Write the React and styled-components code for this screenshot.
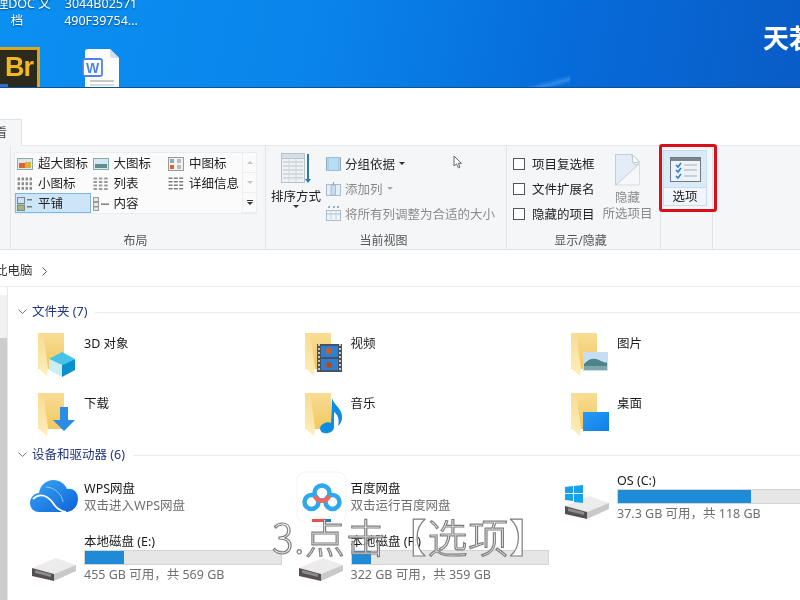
import React from 'react'
import styled, { createGlobalStyle } from 'styled-components'

const GlobalStyle = createGlobalStyle`
  html, body { margin: 0; padding: 0; background: #fff; }
  * { box-sizing: border-box; }
`

const Page = styled.div`
  position: relative;
  width: 800px;
  height: 600px;
  overflow: hidden;
  background: #fff;
  color: #222;
  font-family: "Noto Sans", "Noto Sans CJK SC", sans-serif;
  font-size: 12.5px;
  filter: blur(0.5px);
`

const SharedDefs = styled.svg`
  position: absolute;
  width: 0;
  height: 0;
`

const Desktop = styled.div`
  display: flex;
  gap: 10px;
  height: 88px;
  overflow: hidden;
  border-bottom: 1px solid #0b5299;
  background:
    linear-gradient(165deg, transparent 0 88%, rgba(120, 200, 255, 0.35) 92%, transparent 96%) 480px 0 / 90px 88px no-repeat,
    linear-gradient(100deg, #0b90f2 0%, #0a84ea 40%, #066cda 70%, #0a5cc6 100%);
`

const DeskItem = styled.div`
  flex: none;
  display: flex;
  flex-direction: column;
  align-items: center;
  width: 74px;
  &:first-child { margin-left: -20px; }
`

const DeskLabel = styled.div`
  margin-top: -5px;
  height: 34px;
  width: 90px;
  flex: none;
  text-align: center;
  color: #fff;
  font-size: 12.5px;
  line-height: 17px;
  white-space: nowrap;
  text-shadow: 0 1px 2px rgba(0, 0, 0, 0.5);
`

const BrTile = styled.div`
  position: relative;
  margin-top: 18px;
  width: 46px;
  height: 46px;
  flex: none;
  padding-left: 8px;
  border: 3px solid #e0a31e;
  background: #2b2a1c;
  color: #f2b722;
  font-family: "Liberation Sans", sans-serif;
  font-weight: 700;
  font-size: 27px;
  letter-spacing: -1px;
  line-height: 34px;

  &::after {
    content: "";
    position: absolute;
    left: 3px;
    bottom: 0;
    width: 8px;
    height: 6px;
    background: #2a6fc4;
  }
`

const WordIcon = styled.svg`
  margin-top: 18px;
  flex: none;
`

const Brand = styled.div`
  flex: none;
  margin: 22px 0 0 615px;
  color: #fff;
  font-family: "Noto Sans CJK SC", sans-serif;
  font-size: 26px;
  font-weight: 700;
  line-height: 30px;
  white-space: nowrap;
`

const TabStrip = styled.div`
  display: flex;
  align-items: flex-end;
  height: 58px;
  background: #fff;
  border-bottom: 1px solid #e6e6e6;
`

const Tab = styled.div`
  display: flex;
  justify-content: flex-end;
  width: 22px;
  height: 27px;
  padding: 4px 14px 0 0;
  margin-bottom: -1px;
  overflow: hidden;
  background: #f5f6f7;
  border-top: 1px solid #e2e2e2;
  border-right: 1px solid #e2e2e2;
  white-space: nowrap;
  font-size: 12px;
  line-height: 18px;
  color: #444;
`

const Ribbon = styled.div`
  display: flex;
  height: 104px;
  background: #f5f6f7;
  border-bottom: 1px solid #e2e2e2;
`

const Group = styled.div`
  position: relative;
  flex: none;
  display: flex;
  flex-direction: column;
  width: ${(p) => p.$width}px;
  border-right: 1px solid #e3e4e5;
`

const GroupBody = styled.div`
  flex: 1;
  display: flex;
  min-height: 0;
`

const GroupLabel = styled.div`
  height: 21px;
  text-align: center;
  font-size: 12px;
  line-height: 26px;
  color: #555;
  padding-right: ${(p) => p.$shift || 0}px;
`

const Gallery = styled.div`
  display: flex;
  width: 243px;
  height: 62px;
  margin: 6px 0 0 3px;
  background: #fbfbfb;
  border: 1px solid #ececec;
`

const GalleryGrid = styled.div`
  flex: 1;
  display: grid;
  grid-template-columns: repeat(3, 75.5px);
  grid-auto-rows: 20px;
`

const GalleryItem = styled.div`
  display: flex;
  align-items: center;
  gap: 5px;
  padding: 2px 0 0 1px;
  white-space: nowrap;
  line-height: 18px;
  background: ${(p) => (p.$selected ? '#cde5f9' : 'transparent')};
  border: 1px solid ${(p) => (p.$selected ? '#7eb6e4' : 'transparent')};
`

const Thumb = styled.svg`
  flex: none;
`

const GalleryScroll = styled.div`
  width: 14px;
  display: flex;
  flex-direction: column;
  border-left: 1px solid #eee;
`

const ScrollBtn = styled.div`
  flex: 1;
  display: flex;
  flex-direction: column;
  gap: 1px;
  align-items: center;
  justify-content: center;
  border-bottom: 1px solid #eee;
`

const ScrollBar = styled.div`
  width: 6px;
  height: 1px;
  background: #333;
`

const Caret = styled.div`
  width: 0;
  height: 0;
  border: 3px solid transparent;
  border-top: 3px solid ${(p) => p.$color || '#333'};
  border-bottom: 0;
  transform: ${(p) => (p.$up ? 'rotate(180deg)' : 'none')};
`

const SortButton = styled.div`
  width: 60px;
  flex: none;
  display: flex;
  flex-direction: column;
  align-items: center;
  padding-top: 7px;
  font-size: 12.5px;
  line-height: 16px;
  white-space: nowrap;
`

const SortText = styled.span`
  margin-top: 4px;
`

const RowStack = styled.div`
  display: flex;
  flex-direction: column;
  padding-top: 5px;
`

const ViewRow = styled.div`
  display: flex;
  align-items: center;
  gap: 4px;
  height: 25px;
  white-space: nowrap;
  color: ${(p) => (p.$muted ? '#8a8a8a' : '#2a2a2a')};
`

const CheckRow = styled.div`
  display: flex;
  align-items: center;
  gap: 7px;
  height: 25px;
  padding-left: 6px;
  white-space: nowrap;
`

const CheckBox = styled.span`
  width: 12px;
  height: 12px;
  background: #fff;
  border: 1px solid #555;
`

const HideButton = styled.div`
  width: 54px;
  margin-left: 6px;
  display: flex;
  flex-direction: column;
  align-items: center;
  padding-top: 8px;
  color: #8a8a8a;
  line-height: 16px;
  white-space: nowrap;
`

const HideText = styled.div`
  margin-top: 4px;
  text-align: center;
`

const OptionsButton = styled.div`
  width: 44px;
  height: 56px;
  margin: 4px 0 0 2px;
  display: flex;
  flex-direction: column;
  background: #dbeaf7;
  border: 1px solid #c8deef;
`

const OptionsTop = styled.div`
  height: 37px;
  display: flex;
  align-items: center;
  justify-content: center;
`

const OptionsText = styled.div`
  flex: 1;
  background: #f0f6fb;
  border-top: 1px solid #c8deef;
  text-align: center;
  font-size: 12.5px;
  line-height: 17px;
  color: #222;
`

const RedBox = styled.div`
  position: absolute;
  left: -2px;
  top: -2px;
  width: 58px;
  height: 68px;
  border: 3px solid #d9101c;
  border-radius: 3px;
`

const Cursor = styled.svg`
  position: absolute;
  left: 187px;
  top: 9px;
`

const AddressBar = styled.div`
  display: flex;
  align-items: flex-start;
  gap: 8px;
  height: 37px;
  padding: 12px 0 0 0;
  border-bottom: 1px solid #ececec;
  background: #fff;
  line-height: 18px;
  color: #333;
`

const Crumb = styled.span`
  margin-left: -5px;
  font-size: 12.5px;
`

const CrumbArrow = styled.svg`
  margin-top: 5px;
`

const Body = styled.div`
  display: flex;
  height: 313px;
  overflow: hidden;
`

const Rail = styled.div`
  flex: none;
  width: 8px;
  display: flex;
  flex-direction: column;
  padding-top: 8px;
  border-right: 1px solid #e8e8e8;
`

const RailTrack = styled.div`
  height: 43px;
  background: #f1f1f1;
`

const RailThumb = styled.div`
  flex: 1;
  background: #cdcdcd;
`

const Main = styled.div`
  flex: 1;
  min-width: 0;
`

const SectionHead = styled.div`
  display: flex;
  align-items: center;
  gap: 5px;
  height: 16px;
  margin: ${(p) => p.$top}px 0 0 10px;
  color: #23367f;
  font-size: 12.5px;
  line-height: 16px;
  white-space: nowrap;
`

const HeadLine = styled.div`
  flex: 1;
  height: 1px;
  margin-left: 3px;
  background: #e9ecf1;
`

const TileGrid = styled.div`
  display: grid;
  grid-template-columns: repeat(3, 266.5px);
  margin: ${(p) => p.$top}px 0 0 22px;
  row-gap: ${(p) => p.$gap}px;
  grid-auto-rows: ${(p) => p.$row}px;
`

const Tile = styled.div`
  display: flex;
  min-width: 0;
`

const TileIcon = styled.svg`
  flex: none;
  overflow: visible;
`

const TileText = styled.div`
  flex: 1;
  min-width: 0;
  padding-top: ${(p) => p.$top}px;
  line-height: 17px;
  white-space: nowrap;
`

const TileName = styled.div`
  color: #1a1a1a;
  font-size: 12.5px;
`

const TileSub = styled.div`
  color: #6f6f6f;
  font-size: 12.5px;
`

const Meter = styled.div`
  width: 198px;
  height: 15px;
  margin-bottom: 1px;
  background: #e6e6e6;
  border: 1px solid #d4d4d4;
`

const MeterFill = styled.div`
  height: 100%;
  background: #1f8ad6;
`

const Caption = styled.div`
  position: absolute;
  left: 272px;
  top: 510px;
  color: rgba(255, 255, 255, 0.85);
  font-family: "Noto Sans CJK SC", sans-serif;
  font-size: 40px;
  font-weight: 300;
  letter-spacing: 0.8px;
  line-height: 52px;
  white-space: nowrap;
  -webkit-text-stroke: 1.2px #7f7f7f;
`

const Folder = ({ children }) => (
  <TileIcon width="54" height="44" viewBox="0 0 54 44">
    <rect x="8" y="1" width="26" height="36" fill="url(#folderBack)" />
    <path d="M8 1 L13 1 L18 36 L17 44 L8 36 Z" fill="url(#folderFlap)" />
    {children}
  </TileIcon>
)

const Disk = () => (
  <g>
    <path d="M0 10 L24 0 L44 7 L22 16 Z" fill="#ececec" />
    <path d="M0 10 L22 16 V23 L0 18 Z" fill="#55504f" />
    <path d="M3 12 L19 16 V19 L3 15 Z" fill="#8b8b8b" />
    <path d="M22 16 L44 7 V13 L22 23 Z" fill="#c9c9c9" />
  </g>
)

const DotGrid = ({ cols, rows, w, h, color }) => {
  const cells = []
  for (let r = 0; r < rows; r++) {
    for (let c = 0; c < cols; c++) {
      cells.push(
        <rect key={r + '-' + c} x={c * (16 / cols) + 0.5} y={r * (14 / rows) + 0.5} width={w} height={h} fill={color} />
      )
    }
  }
  return <g>{cells}</g>
}

const layoutItems = [
  { text: '超大图标', icon: (
    <g>
      <rect x="0.5" y="1.5" width="15" height="11" fill="#dfe7ee" stroke="#8aa" />
      <rect x="2" y="6" width="6" height="5" fill="#d9662e" />
      <rect x="8" y="5" width="6" height="6" fill="#d8b13a" />
    </g>
  ) },
  { text: '大图标', icon: (
    <g>
      <rect x="0.5" y="1.5" width="15" height="11" fill="#d8e8f2" stroke="#8aa" />
      <rect x="2" y="7" width="12" height="4" fill="#5f8f8a" />
    </g>
  ) },
  { text: '中图标', icon: (
    <g>
      <rect x="0.5" y="0.5" width="15" height="13" fill="#f2f2f2" stroke="#999" />
      <rect x="2" y="2" width="4" height="4" fill="#8aa7bd" />
      <rect x="9" y="2" width="4" height="4" fill="#bbb" />
      <rect x="2" y="8" width="4" height="4" fill="#d9662e" />
      <rect x="9" y="8" width="4" height="4" fill="#bbb" />
    </g>
  ) },
  { text: '小图标', icon: <DotGrid cols={4} rows={3} w={2.5} h={3} color="#8f8f8f" /> },
  { text: '列表', icon: <DotGrid cols={3} rows={4} w={3.5} h={2} color="#9c9c9c" /> },
  { text: '详细信息', icon: <DotGrid cols={3} rows={4} w={4} h={1.4} color="#777" /> },
  { selected: true, text: '平铺', icon: (
    <g>
      <rect x="0.5" y="0.5" width="7" height="6" fill="#cfe0ea" stroke="#789" />
      <rect x="0.5" y="8" width="7" height="5.5" fill="#a8b36a" stroke="#789" />
      <rect x="10" y="2" width="5" height="1.5" fill="#777" />
      <rect x="10" y="9" width="5" height="1.5" fill="#777" />
    </g>
  ) },
  { text: '内容', icon: (
    <g>
      <rect x="0.5" y="0.5" width="5" height="4" fill="#e8e8e8" stroke="#999" />
      <rect x="0.5" y="5.5" width="5" height="4" fill="#e8e8e8" stroke="#999" />
      <rect x="0.5" y="10" width="5" height="3.5" fill="#e8e8e8" stroke="#999" />
      <rect x="8" y="6.5" width="8" height="1.4" fill="#777" />
    </g>
  ) },
]

const SortIcon = () => (
  <svg width="32" height="32" viewBox="0 0 32 32">
    <rect x="1.5" y="0.5" width="23" height="29" fill="#eef2f6" stroke="#b7c2cc" />
    <rect x="1.5" y="0.5" width="23" height="5" fill="#d6dee6" stroke="#b7c2cc" />
    {[9, 13, 17, 21, 25].map((y) => (
      <line key={y} x1="3" x2="23" y1={y} y2={y} stroke="#b9c3cc" />
    ))}
    {[9, 16].map((x) => (
      <line key={x} x1={x} x2={x} y1="6" y2="29" stroke="#cfd7de" />
    ))}
    <path d="M27 1 H29 V26 H31 L28 30 L25 26 H27 Z" fill="#2c79b9" />
  </svg>
)

const GroupByIcon = () => (
  <svg width="15" height="14" viewBox="0 0 15 14">
    <rect x="2" y="0.5" width="11" height="13" fill="#bcdcf3" stroke="#92c0e2" />
    <rect x="0" y="0" width="1.2" height="14" fill="#9aa" />
    <rect x="13.8" y="0" width="1.2" height="14" fill="#9aa" />
  </svg>
)

const AddColIcon = () => (
  <svg width="15" height="14" viewBox="0 0 15 14">
    <rect x="0.5" y="2.5" width="14" height="11" fill="#e6eef6" stroke="#a9bccd" />
    <rect x="5" y="3" width="4.5" height="10" fill="#c6dcef" stroke="#a9bccd" />
    <rect x="7" y="0" width="1" height="3" fill="#7a9dbb" />
  </svg>
)

const FitIcon = () => (
  <svg width="15" height="15" viewBox="0 0 15 15">
    <rect x="0.5" y="4.5" width="14" height="10" fill="#f2f5f8" stroke="#a9bccd" />
    <line x1="0" x2="15" y1="8" y2="8" stroke="#a9bccd" />
    <line x1="5" x2="5" y1="4" y2="15" stroke="#c4d2de" />
    <line x1="10" x2="10" y1="4" y2="15" stroke="#c4d2de" />
    <path d="M2 1 H4 M7 1 H9 M11 1 H13" stroke="#7a9dbb" strokeWidth="1.4" />
  </svg>
)

const HideIcon = () => (
  <svg width="25" height="32" viewBox="0 0 25 32">
    <path d="M0.5 0.5 H17 L24.5 8 V31 H0.5 Z" fill="#f6f7f8" stroke="#d9dde2" />
    <path d="M0.5 0.5 H17 L20 11 L24 10 L1 31 H0.5 Z" fill="#e4edf7" stroke="#c4cdd8" />
    <path d="M17 0.5 L24.5 8 L18 9 Z" fill="#fff" stroke="#bcc3cc" />
  </svg>
)

const OptionsIcon = () => (
  <svg width="31" height="25" viewBox="0 0 31 25">
    <rect x="0.5" y="0.5" width="30" height="24" fill="#eef3f8" stroke="#6f7a85" />
    <rect x="1" y="1" width="29" height="3" fill="#7b868f" />
    {[8, 13, 19].map((y) => (
      <g key={y}>
        <path d={`M6 ${y} l2 2 l3 -4`} fill="none" stroke="#2f80c4" strokeWidth="1.6" />
        <line x1="14" x2="27" y1={y} y2={y} stroke="#a5aeb6" />
      </g>
    ))}
  </svg>
)

const Chevron = () => (
  <svg width="9" height="6" viewBox="0 0 9 6">
    <path d="M0.5 0.5 L4.5 4.5 L8.5 0.5" fill="none" stroke="#777" />
  </svg>
)

const App = () => (
  <Page>
    <GlobalStyle />
    <SharedDefs>
      <defs>
        <linearGradient id="folderBack" x1="0" y1="0" x2="0" y2="1">
          <stop offset="0" stopColor="#f8dd95" />
          <stop offset="1" stopColor="#f2c760" />
        </linearGradient>
        <linearGradient id="folderFlap" x1="0" y1="0" x2="0" y2="1">
          <stop offset="0" stopColor="#f8dc92" />
          <stop offset="1" stopColor="#fdeeba" />
        </linearGradient>
        <linearGradient id="deskFill" x1="0" y1="0" x2="1" y2="1">
          <stop offset="0" stopColor="#2a9bf5" />
          <stop offset="1" stopColor="#0f7fe6" />
        </linearGradient>
        <linearGradient id="cloudFill" x1="0" y1="0" x2="1" y2="1">
          <stop offset="0" stopColor="#3aa8f5" />
          <stop offset="1" stopColor="#0c62d8" />
        </linearGradient>
      </defs>
    </SharedDefs>
    <Desktop>
      <DeskItem>
        <DeskLabel>
          整理DOC 文
          <br />
          档
        </DeskLabel>
        <BrTile>Br</BrTile>
      </DeskItem>
      <DeskItem>
        <DeskLabel>
          3044B02571
          <br />
          490F39754...
        </DeskLabel>
        <WordIcon width="38" height="46" viewBox="0 0 38 46">
          <path d="M3 5 Q3 2 6 2 H28 L37 11 V46 H3 Z" fill="#fdfdfe" />
          <path d="M28 2 L37 11 H30 Q28 11 28 9 Z" fill="#d6deea" />
          <rect x="1" y="12" width="19" height="17" rx="2" fill="#fff" stroke="#4c86e0" strokeWidth="1.8" />
          <text x="10.5" y="25.5" textAnchor="middle" fontSize="14" fontWeight="700" fill="#4c86e0" fontFamily="Liberation Sans">W</text>
          <rect x="8" y="33" width="24" height="2" fill="#c8c8c8" />
          <rect x="8" y="37" width="24" height="2" fill="#d8d8d8" />
        </WordIcon>
      </DeskItem>
      <Brand>天若</Brand>
    </Desktop>

    <TabStrip>
      <Tab>查看</Tab>
    </TabStrip>

    <Ribbon>
      <Group $width={11} />
      <Group $width={255}>
        <GroupBody>
          <Gallery>
            <GalleryGrid>
              {layoutItems.map((item) => (
                <GalleryItem key={item.text} $selected={item.selected}>
                  <Thumb width="16" height="14" viewBox="0 0 16 14">{item.icon}</Thumb>
                  {item.text}
                </GalleryItem>
              ))}
            </GalleryGrid>
            <GalleryScroll>
              <ScrollBtn>
                <Caret $color="#c4c4c4" $up />
              </ScrollBtn>
              <ScrollBtn>
                <Caret $color="#c4c4c4" />
              </ScrollBtn>
              <ScrollBtn>
                <ScrollBar />
                <Caret />
              </ScrollBtn>
            </GalleryScroll>
          </Gallery>
        </GroupBody>
        <GroupLabel $shift={5}>布局</GroupLabel>
      </Group>
      <Group $width={241}>
        <GroupBody>
          <SortButton>
            <SortIcon />
            <SortText>排序方式</SortText>
            <Caret />
          </SortButton>
          <RowStack>
            <ViewRow>
              <GroupByIcon />
              分组依据
              <Caret />
            </ViewRow>
            <ViewRow $muted>
              <AddColIcon />
              添加列
              <Caret $color="#aaa" />
            </ViewRow>
            <ViewRow $muted>
              <FitIcon />
              将所有列调整为合适的大小
            </ViewRow>
          </RowStack>
        </GroupBody>
        <GroupLabel $shift={5}>当前视图</GroupLabel>
        <Cursor width="10" height="14" viewBox="0 0 10 14">
          <path d="M1 1 V11 L3.5 9 L5.5 13 L7 12 L5.2 8.4 H8.5 Z" fill="#fff" stroke="#666" />
        </Cursor>
      </Group>
      <Group $width={154}>
        <GroupBody>
          <RowStack>
            <CheckRow>
              <CheckBox />
              项目复选框
            </CheckRow>
            <CheckRow>
              <CheckBox />
              文件扩展名
            </CheckRow>
            <CheckRow>
              <CheckBox />
              隐藏的项目
            </CheckRow>
          </RowStack>
          <HideButton>
            <HideIcon />
            <HideText>
              隐藏
              <br />
              所选项目
            </HideText>
          </HideButton>
        </GroupBody>
        <GroupLabel $shift={6}>显示/隐藏</GroupLabel>
      </Group>
      <Group $width={52}>
        <OptionsButton>
          <OptionsTop>
            <OptionsIcon />
          </OptionsTop>
          <OptionsText>选项</OptionsText>
        </OptionsButton>
        <RedBox />
      </Group>
    </Ribbon>

    <AddressBar>
      <Crumb>此电脑</Crumb>
      <CrumbArrow width="7" height="9" viewBox="0 0 7 9">
        <path d="M1.5 0.5 L5.5 4.5 L1.5 8.5" fill="none" stroke="#555" />
      </CrumbArrow>
    </AddressBar>

    <Body>
      <Rail>
        <RailTrack />
        <RailThumb />
      </Rail>
      <Main>
        <SectionHead $top={17}>
          <Chevron />
          文件夹 (7)
          <HeadLine />
        </SectionHead>
        <TileGrid $top={12} $gap={16} $row={44}>
          <Tile>
            <Folder>
              <path d="M19 27 L32 20 L45 27 L32 33 Z" fill="#46c3e8" />
              <path d="M19 27 L32 33 V45 L19 38 Z" fill="#c9eef6" />
              <path d="M45 27 L32 33 V45 L45 38 Z" fill="#0a8fce" />
            </Folder>
            <TileText $top={3}>
              <TileName>3D 对象</TileName>
            </TileText>
          </Tile>
          <Tile>
            <Folder>
              <rect x="20" y="12" width="25" height="28" fill="#47525c" />
              <rect x="24" y="14" width="17" height="11" fill="#2f7fd0" />
              <rect x="24" y="27" width="17" height="11" fill="#2f7fd0" />
              <circle cx="32" cy="19" r="3" fill="#d8581f" />
              <circle cx="32" cy="33" r="3" fill="#b8481a" />
              <line x1="22" x2="22" y1="12" y2="40" stroke="#c8c8c8" strokeDasharray="2 2" strokeWidth="2" />
              <line x1="43" x2="43" y1="12" y2="40" stroke="#c8c8c8" strokeDasharray="2 2" strokeWidth="2" />
            </Folder>
            <TileText $top={3}>
              <TileName>视频</TileName>
            </TileText>
          </Tile>
          <Tile>
            <Folder>
              <rect x="20" y="20" width="25" height="19" fill="#c6def3" />
              <path d="M21 32 Q28 24 36 28 T44 30 V38 H21 Z" fill="#4c8488" />
              <rect x="21" y="34" width="23" height="4" fill="#7ea6a8" />
            </Folder>
            <TileText $top={3}>
              <TileName>图片</TileName>
            </TileText>
          </Tile>
          <Tile>
            <Folder>
              <path d="M30 15 H38 V28 H45 L34 39 L23 28 H30 Z" fill="#2d8be8" />
            </Folder>
            <TileText $top={3}>
              <TileName>下载</TileName>
            </TileText>
          </Tile>
          <Tile>
            <Folder>
              <path d="M35 6 C37 14 46 16 45 27 C44 31 43 32 41 34 C43 26 40 22 37 20 V35 C37 40 31 42 27 41 C22 40 22 34 26 32 C29 30 32 30 34 31 Z" fill="#0c8de0" />
            </Folder>
            <TileText $top={3}>
              <TileName>音乐</TileName>
            </TileText>
          </Tile>
          <Tile>
            <Folder>
              <rect x="20" y="20" width="26" height="19" fill="url(#deskFill)" />
            </Folder>
            <TileText $top={3}>
              <TileName>桌面</TileName>
            </TileText>
          </Tile>
        </TileGrid>

        <SectionHead $top={11}>
          <Chevron />
          设备和驱动器 (6)
          <HeadLine />
        </SectionHead>
        <TileGrid $top={9} $gap={11} $row={50}>
          <Tile>
            <TileIcon width="54" height="50" viewBox="0 0 54 50">
              <path d="M9 40 C2 40 0 34 0 31 C0 25 5 21 9 21 C10 13 17 8 23 8 C30 8 35 12 37 17 C44 16 48 21 48 27 C48 35 42 40 36 40 Z" fill="url(#cloudFill)" />
              <path d="M3 27 C10 20 18 24 23 31 C26 36 30 39 36 40" fill="none" stroke="#fff" strokeWidth="1.8" />
              <path d="M16 15 C24 15 32 22 33 30" fill="none" stroke="#8cc8f8" strokeWidth="1" />
            </TileIcon>
            <TileText $top={8}>
              <TileName>WPS网盘</TileName>
              <TileSub>双击进入WPS网盘</TileSub>
            </TileText>
          </Tile>
          <Tile>
            <TileIcon width="54" height="50" viewBox="0 0 54 50">
              <rect x="0" y="0" width="49" height="50" rx="8" fill="#fff" stroke="#f4f4f4" />
              <circle cx="14.5" cy="30" r="7" fill="none" stroke="#2ea8ec" strokeWidth="4.5" />
              <circle cx="35.5" cy="30" r="7" fill="none" stroke="#2ea8ec" strokeWidth="4.5" />
              <circle cx="25" cy="21" r="7.5" fill="none" stroke="#2ea8ec" strokeWidth="4.5" />
              <path d="M18 24 A7.5 7.5 0 0 0 32 24" fill="none" stroke="#ef6560" strokeWidth="4.5" />
            </TileIcon>
            <TileText $top={8}>
              <TileName>百度网盘</TileName>
              <TileSub>双击运行百度网盘</TileSub>
            </TileText>
          </Tile>
          <Tile>
            <TileIcon width="54" height="50" viewBox="0 0 54 50">
              <g transform="translate(2 24)">
                <Disk />
              </g>
              <path d="M2 15 L10 14 V21 H2 Z M11 14 L20 13 V21 H11 Z M2 22 H10 V29 L2 28 Z M11 22 H20 V31 L11 30 Z" fill="#14a3e8" />
            </TileIcon>
            <TileText $top={0}>
              <TileName>OS (C:)</TileName>
              <Meter>
                <MeterFill style={{ width: `${(134 / 198) * 100}%` }} />
              </Meter>
              <TileSub>37.3 GB 可用，共 118 GB</TileSub>
            </TileText>
          </Tile>
          <Tile>
            <TileIcon width="54" height="50" viewBox="0 0 54 50">
              <g transform="translate(2 25)">
                <Disk />
              </g>
            </TileIcon>
            <TileText $top={0}>
              <TileName>本地磁盘 (E:)</TileName>
              <Meter>
                <MeterFill style={{ width: `${(39 / 198) * 100}%` }} />
              </Meter>
              <TileSub>455 GB 可用，共 569 GB</TileSub>
            </TileText>
          </Tile>
          <Tile>
            <TileIcon width="54" height="50" viewBox="0 0 54 50">
              <rect x="15" y="-14" width="11" height="3" fill="#e8504c" />
              <rect x="26" y="-14" width="8" height="3" fill="#2c72c8" />
              <g transform="translate(2 25)">
                <Disk />
              </g>
            </TileIcon>
            <TileText $top={0}>
              <TileName>本地磁盘 (F:)</TileName>
              <Meter>
                <MeterFill style={{ width: `${(20 / 198) * 100}%` }} />
              </Meter>
              <TileSub>322 GB 可用，共 359 GB</TileSub>
            </TileText>
          </Tile>
        </TileGrid>
      </Main>
    </Body>

    <Caption>3.点击【选项】</Caption>
  </Page>
)

export default App
